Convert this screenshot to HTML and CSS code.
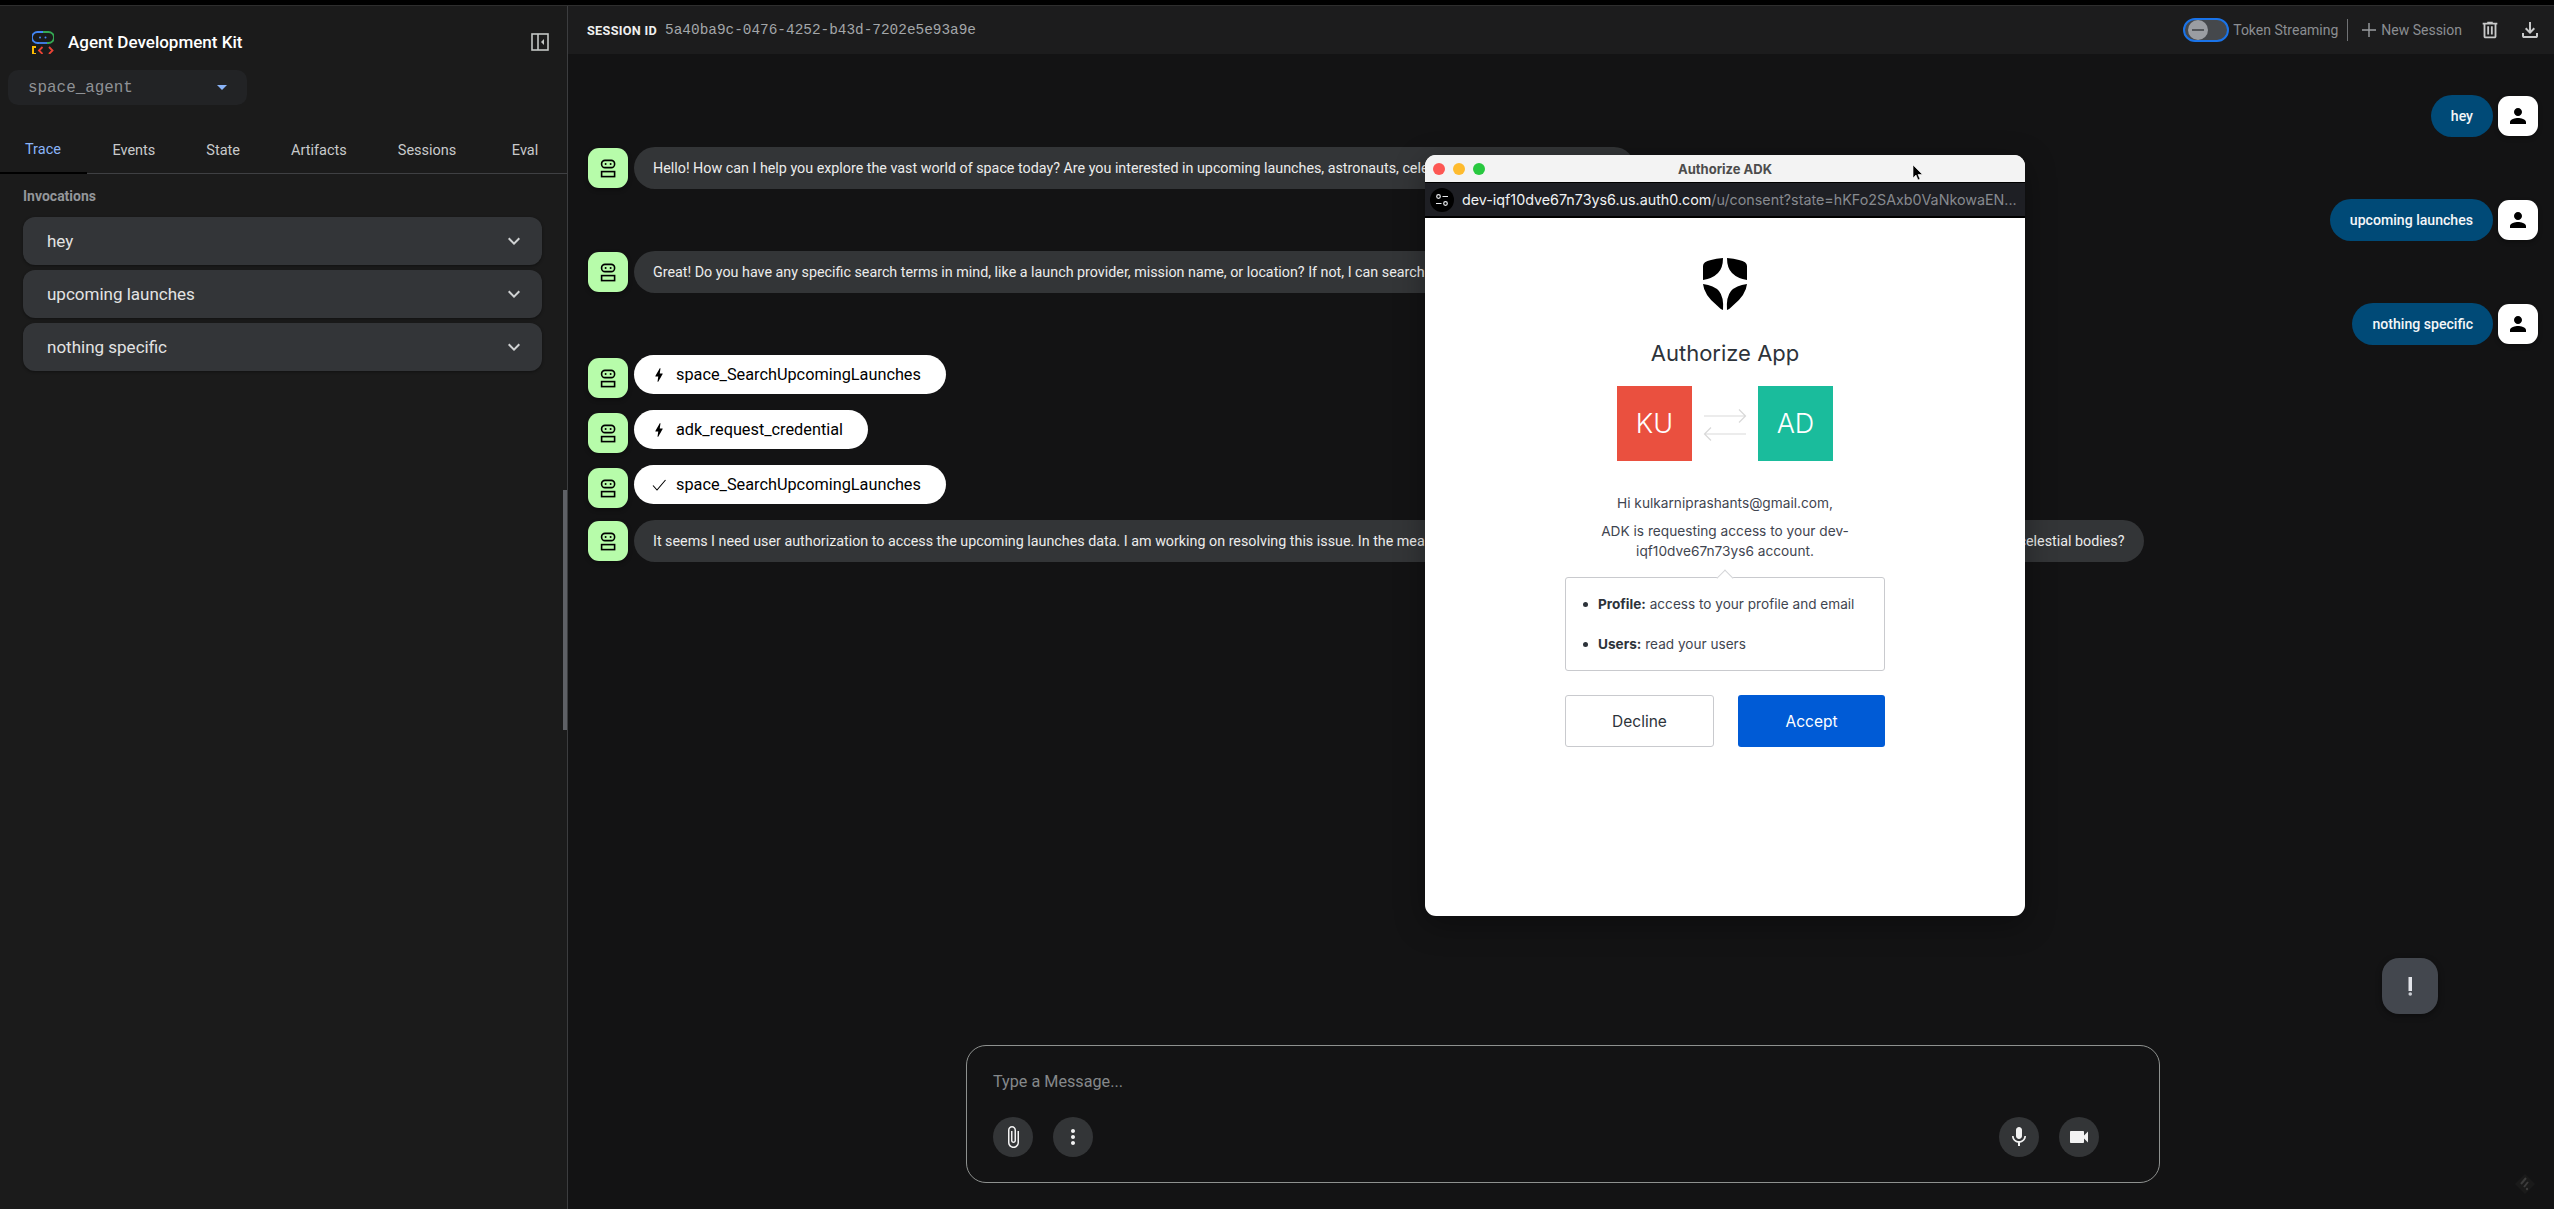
FILE: index.html
```html
<!DOCTYPE html>
<html lang="en">
<head>
<meta charset="utf-8">
<title>Agent Development Kit</title>
<link rel="stylesheet" href="styles.css">
</head>
<body>
<svg class="defs" width="0" height="0" aria-hidden="true">
  <symbol id="bot" viewBox="0 0 40 40">
    <rect x="13.6" y="12.4" width="13" height="7.2" rx="3.4" fill="none" stroke="#000" stroke-width="1.6"/>
    <circle cx="17.6" cy="16" r="1" fill="#000"/><circle cx="22.6" cy="16" r="1" fill="#000"/>
    <rect x="13.6" y="23.6" width="13" height="5" fill="none" stroke="#000" stroke-width="1.6"/>
  </symbol>
  <symbol id="person" viewBox="0 0 24 24"><path d="M12 12c2.21 0 4-1.79 4-4s-1.79-4-4-4-4 1.79-4 4 1.79 4 4 4zm0 2c-2.67 0-8 1.34-8 4v2h16v-2c0-2.66-5.33-4-8-4z"/></symbol>
  <symbol id="chev" viewBox="0 0 24 24"><path d="M16.59 8.59 12 13.17 7.41 8.59 6 10l6 6 6-6z"/></symbol>
  <symbol id="bolt" viewBox="0 0 24 24"><path d="M11 21h-1l1-7H7.5c-.58 0-.57-.32-.38-.66.19-.34.05-.08.07-.12C8.48 10.94 10.42 7.54 13 3h1l-1 7h3.5c.49 0 .56.33.47.51l-.07.15C12.96 17.55 11 21 11 21z"/></symbol>
</svg>
<div class="screen">
  <div class="topbar"></div>
  <div class="app">
    <aside class="sidebar">
      <div class="brand">
        <svg class="logo" width="22" height="23" viewBox="0 0 22 23" fill="none">
          <path d="M7 12H5.5A4.5 4.5 0 0 1 5.500 1H11" stroke="#4285f4" stroke-width="1.8"/>
          <path d="M7 12h8" stroke="#4285f4" stroke-width="1.8"/>
          <path d="M11 1h5.500A4.500 4.500 0 0 1 16.500 12H15" stroke="#34a853" stroke-width="1.800"/>
          <circle cx="8" cy="6.500" r="1" fill="#4285f4"/><circle cx="13.500" cy="6.500" r="1" fill="#4285f4"/>
          <path d="M4 16H1v7h3" stroke="#fbbc04" stroke-width="2"/>
          <path d="M10.500 16l-3.500 3.500 3.500 3.500M17 16l3.500 3.500L17 23" stroke="#ea4335" stroke-width="1.800"/>
        </svg>
        <span class="brand-name">Agent Development Kit</span>
        <svg class="panel-icon" width="18" height="18" viewBox="0 0 18 18" fill="none">
          <rect x="1" y="1" width="16" height="16" stroke="#c4c7c5" stroke-width="1.600"/>
          <path d="M7 1v16" stroke="#c4c7c5" stroke-width="1.600"/>
          <path d="M13 6v6l-3-3z" fill="#c4c7c5"/>
        </svg>
      </div>
      <div class="agent-select"><span class="agent-name">space_agent</span><i class="caret"></i></div>
      <nav class="tabs">
        <span class="tab active">Trace</span>
        <span class="tab">Events</span>
        <span class="tab">State</span>
        <span class="tab">Artifacts</span>
        <span class="tab">Sessions</span>
        <span class="tab">Eval</span>
      </nav>
      <div class="inv-label">Invocations</div>
      <div class="inv-list">
        <div class="inv"><span>hey</span><svg class="chev"><use href="#chev"/></svg></div>
        <div class="inv"><span>upcoming launches</span><svg class="chev"><use href="#chev"/></svg></div>
        <div class="inv"><span>nothing specific</span><svg class="chev"><use href="#chev"/></svg></div>
      </div>
      <div class="scrollbar"></div>
    </aside>
    <main class="main">
      <header class="head">
        <span class="sid-label">SESSION ID</span>
        <span class="sid">5a40ba9c-0476-4252-b43d-7202e5e93a9e</span>
        <div class="head-right">
          <span class="toggle"><i class="thumb"></i></span>
          <span class="head-text toggle-label">Token Streaming</span>
          <i class="divider"></i>
          <svg class="plus" width="24" height="24" viewBox="0 0 24 24"><path d="M19 12.700h-6.300V19h-1.400v-6.300H5v-1.400h6.300V5h1.400v6.300H19z"/></svg>
          <span class="head-text">New Session</span>
          <svg class="trash" width="22" height="22" viewBox="0 -960 960 960"><path d="M280-120q-33 0-56.500-23.500T200-200v-520h-40v-80h200v-40h240v40h200v80h-40v520q0 33-23.500 56.500T680-120H280Zm400-600H280v520h400v-520ZM360-280h80v-360h-80v360Zm160 0h80v-360h-80v360ZM280-720v520-520Z"/></svg>
          <svg class="download" width="24" height="24" viewBox="0 -960 960 960"><path d="M480-320 280-520l56-58 104 104v-326h80v326l104-104 56 58-200 200ZM240-160q-33 0-56.500-23.500T160-240v-120h80v120h480v-120h80v120q0 33-23.500 56.500T720-160H240Z"/></svg>
        </div>
      </header>
      <section class="chat">
        <div class="row user"><div class="bubble ub">hey</div><div class="av av-user"><svg class="person"><use href="#person"/></svg></div></div>
        <div class="row"><div class="av av-bot"><svg class="boticon"><use href="#bot"/></svg></div><div class="bubble bb">Hello! How can I help you explore the vast world of space today? Are you interested in upcoming launches, astronauts, celestial bodies, or space events?</div></div>
        <div class="row user"><div class="bubble ub">upcoming launches</div><div class="av av-user"><svg class="person"><use href="#person"/></svg></div></div>
        <div class="row"><div class="av av-bot"><svg class="boticon"><use href="#bot"/></svg></div><div class="bubble bb">Great! Do you have any specific search terms in mind, like a launch provider, mission name, or location? If not, I can search for all upcoming launches.</div></div>
        <div class="row user"><div class="bubble ub">nothing specific</div><div class="av av-user"><svg class="person"><use href="#person"/></svg></div></div>
        <div class="row tool"><div class="av av-bot"><svg class="boticon"><use href="#bot"/></svg></div><div class="pill"><svg class="pill-icon"><use href="#bolt"/></svg><span>space_SearchUpcomingLaunches</span></div></div>
        <div class="row tool"><div class="av av-bot"><svg class="boticon"><use href="#bot"/></svg></div><div class="pill"><svg class="pill-icon"><use href="#bolt"/></svg><span>adk_request_credential</span></div></div>
        <div class="row tool"><div class="av av-bot"><svg class="boticon"><use href="#bot"/></svg></div><div class="pill"><svg class="check-icon" viewBox="0 0 18 18" fill="none"><path d="M3 9.500l4 4.500 8.500-10" stroke="#000" stroke-width="1.100"/></svg><span>space_SearchUpcomingLaunches</span></div></div>
        <div class="row"><div class="av av-bot"><svg class="boticon"><use href="#bot"/></svg></div><div class="bubble bb">It seems I need user authorization to access the upcoming launches data. I am working on resolving this issue. In the meantime, is there anything else I could help with? Perhaps you'd like to know about astronauts or celestial bodies?</div></div>
      </section>
      <div class="composer">
        <div class="placeholder">Type a Message...</div>
        <div class="tools">
          <span class="round"><svg width="24" height="24" viewBox="0 0 24 24"><path d="M16.500 6v11.500c0 2.210-1.790 4-4 4s-4-1.790-4-4V5c0-1.380 1.120-2.500 2.500-2.500s2.500 1.120 2.500 2.500v10.500c0 .55-.45 1-1 1s-1-.45-1-1V6H10v9.500c0 1.380 1.120 2.500 2.500 2.500s2.500-1.120 2.500-2.500V5c0-2.210-1.790-4-4-4S7 2.790 7 5v12.500c0 3.040 2.460 5.500 5.500 5.500s5.500-2.460 5.500-5.500V6h-1.500z"/></svg></span>
          <span class="round"><svg width="24" height="24" viewBox="0 0 24 24"><path d="M12 8c1.100 0 2-.9 2-2s-.9-2-2-2-2 .9-2 2 .9 2 2 2zm0 2c-1.100 0-2 .9-2 2s.9 2 2 2 2-.9 2-2-.9-2-2-2zm0 6c-1.100 0-2 .9-2 2s.9 2 2 2 2-.9 2-2-.9-2-2-2z"/></svg></span>
          <span class="tools-gap"></span>
          <span class="round"><svg width="24" height="24" viewBox="0 0 24 24"><path d="M12 14c1.660 0 2.990-1.340 2.990-3L15 5c0-1.660-1.340-3-3-3S9 3.340 9 5v6c0 1.660 1.340 3 3 3zm5.300-3c0 3-2.540 5.100-5.300 5.100S6.700 14 6.700 11H5c0 3.410 2.720 6.230 6 6.720V21h2v-3.280c3.280-.48 6-3.300 6-6.720h-1.700z"/></svg></span>
          <span class="round"><svg width="24" height="24" viewBox="0 0 24 24"><path d="M17 10.500V7c0-.55-.45-1-1-1H4c-.55 0-1 .45-1 1v10c0 .55.45 1 1 1h12c.55 0 1-.45 1-1v-3.500l4 4v-11l-4 4z"/></svg></span>
        </div>
      </div>
      <div class="feedback"><svg width="24" height="24" viewBox="0 0 24 24"><rect x="10.500" y="3" width="3.500" height="14" fill="#e3e5ea"/><circle cx="12.250" cy="20" r="1.800" fill="#c9ccd2"/></svg></div>
      <svg class="corner" width="22" height="22" viewBox="0 0 22 22" fill="none"><path d="M11 1l10 10-10 10L1 11z" fill="#1a1a1a"/><path d="M12 5l-5 6M14 9l-4 5" stroke="#3c3c3c" stroke-width="2"/><circle cx="13" cy="16" r="1.200" fill="#3c3c3c"/></svg>
    </main>
  </div>
  <div class="popup">
    <div class="win-title">
      <span class="lights"><i class="light red"></i><i class="light amber"></i><i class="light green"></i></span>
      <span class="win-name">Authorize ADK</span>
    </div>
    <div class="urlbar">
      <span class="url-icon"><svg width="16" height="16" viewBox="0 0 16 16" fill="none" stroke="#e8eaed" stroke-width="1.200"><circle cx="4.500" cy="4.500" r="1.800"/><path d="M8.500 4.500H14M2 11.500h5.500"/><circle cx="11.500" cy="11.500" r="1.800"/></svg></span>
      <span class="url"><b class="url-host">dev-iqf10dve67n73ys6.us.auth0.com</b>/u/consent?state=hKFo2SAxb0VaNkowaEN...</span>
    </div>
    <div class="consent">
      <svg class="shield" width="44" height="52" viewBox="0 0 44 52">
        <path d="M8 2Q13 .5 20 0q0 10-5 15-5.500 5.500-15 7V8q0-4.500 8-6z"/>
        <path d="M36 2Q31 .5 24 0q0 10 5 15 5.500 5.500 15 7V8q0-4.500-8-6z"/>
        <path d="M0 26q11 1.500 16 7 5 6 4 19-2-.500-6-4.500Q1 37 0 26z"/>
        <path d="M44 26q-11 1.500-16 7-5 6-4 19 2-.500 6-4.500Q43 37 44 26z"/>
      </svg>
      <h1 class="consent-title">Authorize App</h1>
      <div class="apps">
        <span class="app-tile ku">KU</span>
        <svg class="swap" width="44" height="36" viewBox="0 0 44 36" fill="none" stroke="#d9d9d9" stroke-width="1.200"><path d="M1 10h41M36 3.500l6.500 6.500-6.500 6.500"/><path d="M43 28H2M8 21.500 1.500 28 8 34.500"/></svg>
        <span class="app-tile ad">AD</span>
      </div>
      <p class="hi">Hi kulkarniprashants@gmail.com,</p>
      <p class="req">ADK is requesting access to your dev-iqf10dve67n73ys6 account.</p>
      <ul class="scopes">
        <li><span><strong>Profile:</strong> access to your profile and email</span></li>
        <li><span><strong>Users:</strong> read your users</span></li>
      </ul>
      <div class="actions">
        <span class="btn decline">Decline</span>
        <span class="btn accept">Accept</span>
      </div>
    </div>
    <svg class="cursor" width="12" height="18" viewBox="0 0 12 18"><path d="M1 1v13l3-3 2 5 2-1-2-4.500h4.500z" fill="#000" stroke="#fff" stroke-width=".6"/></svg>
  </div>
</div>
</body>
</html>
```
FILE: styles.css
```css
* { box-sizing: border-box; }
html, body { margin: 0; height: 100%; background: #000; }
body { font-family: Roboto, "Noto Sans", sans-serif; overflow: hidden; }
.defs { position: absolute; }
.screen { position: relative; width: 2554px; height: 1209px; display: flex; flex-direction: column; overflow: hidden; }
.topbar { height: 6px; flex: none; background: #000; border-bottom: 1px solid #2e2e2e; }
.app { flex: 1; display: flex; min-height: 0; }

/* sidebar */
.sidebar { position: relative; width: 568px; flex: none; background: #1b1b1b; border-right: 1px solid #3c3d3f; }
.brand { display: flex; align-items: center; padding: 22px 18px 0 32px; height: 50px; }
.brand-name { margin-left: 14px; font-size: 17px; font-weight: 500; color: #fff; }
.panel-icon { margin-left: auto; }
.agent-select { display: flex; align-items: center; justify-content: space-between; width: 239px; height: 35px; margin: 14px 0 0 8px; padding: 0 20px 0 20px; background: #222325; border-radius: 10px; }
.agent-name { font-family: "Liberation Mono", monospace; font-size: 15.900px; color: #8f9296; }
.caret { width: 0; height: 0; border-left: 5px solid transparent; border-right: 5px solid transparent; border-top: 5px solid #8ab4f8; }
.tabs { display: flex; height: 48px; margin-top: 21px; border-bottom: 1px solid #3f4043; }
.tab { display: flex; align-items: center; padding: 0 25.500px; font-size: 14.500px; color: #c8cacb; white-space: nowrap; height: 48px; }
.tab.active { color: #8ab4f8; border-bottom: 2px solid #000; padding: 0 26px 0 25px; }
.tab:last-child { padding-left: 30px; }
.inv-label { margin: 13px 0 0 23px; font-size: 14px; line-height: 18px; font-weight: 700; color: #93969a; }
.inv-list { display: flex; flex-direction: column; gap: 5px; margin: 12px 25px 0 23px; }
.inv { display: flex; align-items: center; justify-content: space-between; height: 48px; padding: 0 16px 1px 24px; background: #333538; border-radius: 12px; font-size: 17px; color: #e3e3e3; box-shadow: 0 1px 3px rgba(0,0,0,.4); }
.chev { width: 24px; height: 24px; fill: #d0d2d3; }
.scrollbar { position: absolute; right: 0; top: 484px; width: 4px; height: 240px; background: #5f6166; }

/* main */
.main { position: relative; flex: 1; min-width: 0; display: flex; flex-direction: column; background: #131314; }
.head { display: flex; align-items: center; height: 48px; flex: none; padding: 0 12px 0 19px; background: #1c1c1d; }
.sid-label { font-size: 12.700px; font-weight: 700; color: #f0f0f0; letter-spacing: .3px; }
.sid { margin-left: 8px; font-family: "Liberation Mono", monospace; font-size: 14.400px; color: #a3a6a9; }
.head-right { margin-left: auto; display: flex; align-items: center; }
.toggle { display: flex; align-items: center; width: 46px; height: 24px; padding-left: 3px; border: 2px solid #1a73e8; border-radius: 12px; background: #45484c; }
.thumb { position: relative; display: block; width: 20px; height: 20px; border-radius: 50%; background: #9a9da2; }
.thumb::after { content: ""; position: absolute; left: 4px; right: 4px; top: 9px; height: 2px; background: #54575b; }
.head-text { font-size: 14px; color: #8b8e92; white-space: nowrap; }
.toggle-label { margin-left: 4px; }
.divider { width: 1px; height: 22px; margin: 0 9px; background: #707275; }
.plus { fill: #9a9da1; }
.trash { margin-left: 17px; fill: #c8c9ca; }
.download { margin-left: 17px; fill: #c8c9ca; }

.chat { flex: 1; min-height: 0; padding: 41px 16px 0 20px; display: flex; flex-direction: column; }
.row { display: flex; align-items: flex-start; gap: 6px; margin-bottom: 10px; }
.row.user { justify-content: flex-end; gap: 5px; }
.row.tool { margin-bottom: 12px; }
.av { width: 40px; height: 40px; flex: none; margin-top: 1px; border-radius: 11px; display: flex; align-items: center; justify-content: center; box-shadow: 0 2px 4px rgba(0,0,0,.35); }
.row.tool .av { margin-top: 3px; }
.av-bot { background: #b7fcaa; }
.av-user { background: #fff; }
.boticon { width: 40px; height: 40px; }
.person { width: 24px; height: 24px; fill: #000; }
.bubble { height: 42px; display: flex; align-items: center; border-radius: 21px; padding: 0 20px; white-space: nowrap; font-size: 14.300px; }
.ub { background: #004a77; color: #f4f6f8; font-size: 14.100px; font-weight: 500; }
.bb { background: #333537; color: #ececec; padding: 0 20px 0 19px; }
.pill { height: 39px; display: flex; align-items: center; gap: 8px; padding: 0 25px 0 16px; background: #fff; color: #000; border-radius: 20px; font-size: 16.300px; white-space: nowrap; }
.pill-icon { width: 18px; height: 18px; fill: #000; }
.check-icon { width: 18px; height: 18px; }

.composer { flex: none; width: 1194px; height: 138px; margin: 0 0 26px 398px; padding: 26px 60px 0 26px; border: 1px solid #8e918f; border-radius: 20px; }
.placeholder { font-size: 16.200px; line-height: 20px; color: #85888a; }
.tools { display: flex; gap: 20px; margin-top: 25px; }
.tools-gap { flex: 1; }
.round { width: 40px; height: 40px; border-radius: 50%; background: #333537; display: flex; align-items: center; justify-content: center; }
.round svg { fill: #f2f2f2; }
.feedback { position: absolute; left: 1814px; top: 952px; width: 56px; height: 56px; border-radius: 17px; background: #43474e; display: flex; align-items: center; justify-content: center; box-shadow: 0 2px 6px rgba(0,0,0,.4); }
.corner { position: absolute; right: 18px; bottom: 14px; }

/* popup */
.popup { position: absolute; left: 1425px; top: 155px; width: 600px; height: 761px; background: #fff; border-radius: 11px; overflow: hidden; display: flex; flex-direction: column; box-shadow: 0 8px 30px rgba(0,0,0,.35); font-family: Inter, sans-serif; }
.win-title { position: relative; flex: none; height: 28px; display: flex; align-items: center; justify-content: center; background: #f3f3f3; border-bottom: 1px solid #000; }
.lights { position: absolute; left: 8px; top: 8px; display: flex; gap: 8px; }
.light { width: 12px; height: 12px; border-radius: 50%; }
.red { background: #fd5753; }
.amber { background: #febb2e; }
.green { background: #28c83f; }
.win-name { font-size: 13px; font-weight: 700; color: #4c4c4c; }
.urlbar { flex: none; height: 35px; display: flex; align-items: center; padding-left: 5px; background: #1e1f24; border-bottom: 2px solid #000; }
.url-icon { width: 24px; height: 24px; border-radius: 50%; background: #000; display: flex; align-items: center; justify-content: center; }
.url { margin-left: 8px; font-size: 14.300px; color: #878a8f; white-space: nowrap; }
.url-host { font-weight: 400; color: #f1f3f4; }
.consent { flex: 1; display: flex; flex-direction: column; align-items: center; padding-top: 40px; }
.shield { fill: #000; flex: none; }
.consent-title { margin: 28px 0 0; font-size: 22px; line-height: 30px; font-weight: 400; color: #2d333a; }
.apps { display: flex; align-items: center; gap: 11px; margin-top: 18px; }
.app-tile { width: 75px; height: 75px; display: flex; align-items: center; justify-content: center; font-size: 27px; font-weight: 300; color: #fff; }
.ku { background: #ea503f; }
.ad { background: #1abc9c; }
.hi, .req { width: 320px; margin: 32px 0 0; font-size: 13.700px; line-height: 20px; text-align: center; color: #3f4550; }
.req { margin-top: 9px; line-height: 19.500px; padding: 0 30px; }
.scopes { position: relative; list-style: none; width: 320px; margin: 16px 0 0; padding: 16px 12px 16px 17px; border: 1px solid #c9cace; border-radius: 3px; display: flex; flex-direction: column; gap: 20px; font-size: 13.600px; line-height: 20px; color: #3f4550; }
.scopes::before { content: ""; position: absolute; left: 153px; top: -6px; width: 11px; height: 11px; background: #fff; border-left: 1px solid #d4d5d8; border-top: 1px solid #d4d5d8; transform: rotate(45deg); }
.scopes li { display: flex; align-items: center; gap: 10px; }
.scopes li::before { content: ""; width: 5px; height: 5px; border-radius: 50%; background: #2d333a; flex: none; }
.scopes strong { font-weight: 700; color: #2d333a; }
.actions { display: flex; justify-content: space-between; width: 320px; margin-top: 24px; }
.btn { display: flex; align-items: center; justify-content: center; height: 52px; border-radius: 3px; font-size: 15.500px; }
.decline { width: 149px; border: 1px solid #c9cace; color: #2d333a; }
.accept { width: 147px; background: #005bd6; color: #fff; }
.cursor { position: absolute; left: 487px; top: 9px; }
```
